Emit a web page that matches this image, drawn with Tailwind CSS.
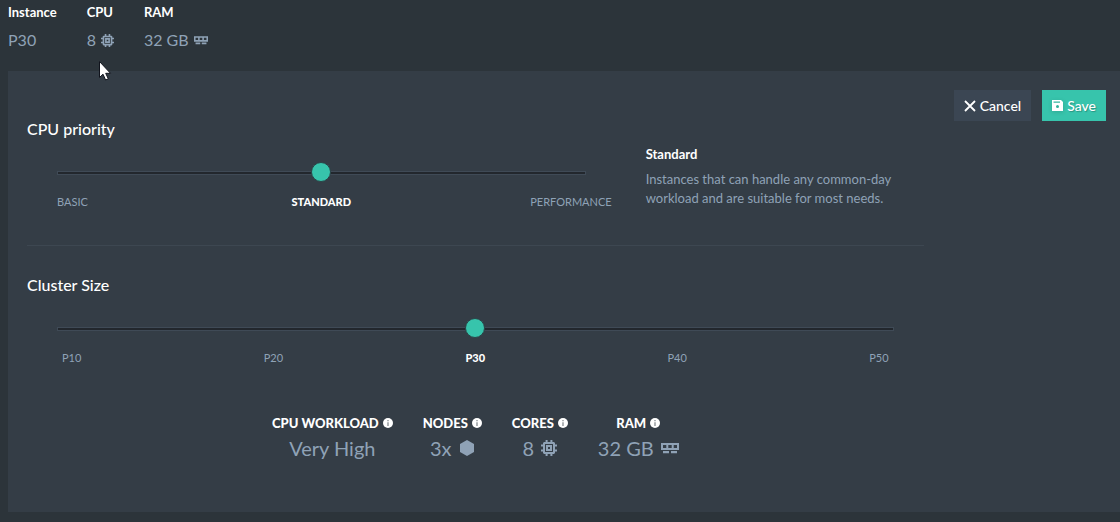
<!DOCTYPE html>
<html lang="en">
<head>
<meta charset="utf-8">
<meta name="viewport" content="width=device-width, initial-scale=1">
<title>Instance size</title>
<script src="https://cdn.jsdelivr.net/npm/@tailwindcss/browser@4"></script>
</head>
<body class="min-h-screen bg-[#2c343a] font-['Lato',sans-serif] text-[#8fa2b6]">
<svg class="hidden">
  <symbol id="chip" viewBox="0 0 16 16">
    <path fill="currentColor" fill-rule="evenodd" d="M4.600 0h2v2h2.800V0h2v2H13l1 1v1.600h2v2h-2v2.800h2v2h-2V13l-1 1h-1.600v2h-2v-2H6.600v2h-2v-2H3l-1-1v-1.600H0v-2h2V6.600H0v-2h2V3l1-1h1.600zM4 4v8h8V4zM5 5h6v6H5zm2 2v2h2V7z"/>
  </symbol>
  <symbol id="ram" viewBox="0 0 18 11">
    <path fill="currentColor" fill-rule="evenodd" d="M0 0h18v7H0zM2 2v3h3.300V2zM7.300 2v3h3.400V2zM12.700 2v3H16V2zM2 8h6v2.300H2zM10 8h6v2.300h-6z"/>
  </symbol>
  <symbol id="info" viewBox="0 0 10 10">
    <circle cx="5" cy="5" r="5" fill="currentColor"/>
    <path fill="#343d46" fill-opacity=".65" d="M4.400 2h1.200v1.200H4.400zM4.400 4.200h1.200V8H4.400z"/>
  </symbol>
</svg>

<header class="flex gap-[30px] pt-1 pl-2">
  <div>
    <div class="text-[13px] leading-4 font-bold text-white">Instance</div>
    <div class="mt-2 text-base leading-6">P30</div>
  </div>
  <div>
    <div class="text-[13px] leading-4 font-bold text-white">CPU</div>
    <div class="mt-2 flex items-center gap-[5px] text-base leading-6">8 <svg class="h-[13px] w-[13px]"><use href="#chip"/></svg></div>
  </div>
  <div>
    <div class="text-[13px] leading-4 font-bold text-white">RAM</div>
    <div class="mt-2 flex items-center gap-[5px] text-base leading-6">32 GB <svg class="h-[9px] w-[14px]"><use href="#ram"/></svg></div>
  </div>
</header>

<form class="mt-[19px] mb-[9px] ml-2 flex items-start gap-[30px] bg-[#343d46] pt-[19px] pr-[14px] pb-[50px] pl-[19px]">
  <main class="min-w-0 flex-1 pt-[27px]">
    <section class="flex border-b border-[#3d4751] pb-[35px]">
      <div class="min-w-0 flex-1">
        <h2 class="text-base leading-6 font-medium text-white"><label for="priority">CPU priority</label></h2>
        <div class="mt-[22px] pl-[30px]">
          <input id="priority" type="range" min="0" max="2" value="1" class="block h-5 w-full cursor-pointer appearance-none bg-transparent [&::-webkit-slider-runnable-track]:h-1 [&::-webkit-slider-runnable-track]:border [&::-webkit-slider-runnable-track]:border-[#3f4a56] [&::-webkit-slider-runnable-track]:bg-[#22272d] [&::-webkit-slider-thumb]:-mt-[10px] [&::-webkit-slider-thumb]:h-5 [&::-webkit-slider-thumb]:w-5 [&::-webkit-slider-thumb]:appearance-none [&::-webkit-slider-thumb]:rounded-full [&::-webkit-slider-thumb]:border [&::-webkit-slider-thumb]:border-[#2b4448] [&::-webkit-slider-thumb]:bg-[#37c4ac]">
          <div class="mt-[11px] grid grid-cols-[1fr_auto_1fr] text-[11px] leading-4">
            <span>BASIC</span>
            <span class="font-black text-white">STANDARD</span>
            <span class="-mr-[26px] justify-self-end">PERFORMANCE</span>
          </div>
        </div>
      </div>
      <div class="ml-[60px] w-[278px] pt-[29px] text-[13px] leading-[19px]">
        <h3 class="leading-4 font-bold text-white">Standard</h3>
        <p class="mt-2">Instances that can handle any common-day workload and are suitable for most needs.</p>
      </div>
    </section>

    <section class="pt-[27px]">
      <h2 class="text-base leading-6 font-medium text-white"><label for="size">Cluster Size</label></h2>
      <div class="mt-[22px] pr-[30px] pl-[30px]">
        <input id="size" type="range" min="0" max="4" value="2" class="block h-5 w-full cursor-pointer appearance-none bg-transparent [&::-webkit-slider-runnable-track]:h-1 [&::-webkit-slider-runnable-track]:border [&::-webkit-slider-runnable-track]:border-[#3f4a56] [&::-webkit-slider-runnable-track]:bg-[#22272d] [&::-webkit-slider-thumb]:-mt-[10px] [&::-webkit-slider-thumb]:h-5 [&::-webkit-slider-thumb]:w-5 [&::-webkit-slider-thumb]:appearance-none [&::-webkit-slider-thumb]:rounded-full [&::-webkit-slider-thumb]:border [&::-webkit-slider-thumb]:border-[#2b4448] [&::-webkit-slider-thumb]:bg-[#37c4ac]">
        <div class="mt-[11px] flex justify-between px-[5px] text-[11px] leading-4">
          <span>P10</span><span>P20</span><span class="font-black text-white">P30</span><span>P40</span><span>P50</span>
        </div>
      </div>
    </section>

    <dl class="mt-[49px] flex justify-center gap-[30px] text-center">
      <div>
        <dt class="flex items-center justify-center gap-1 text-[13px] leading-4 font-black text-white">CPU WORKLOAD <svg class="h-[10px] w-[10px]"><use href="#info"/></svg></dt>
        <dd class="mt-[3px] text-xl leading-7">Very High</dd>
      </div>
      <div>
        <dt class="flex items-center justify-center gap-1 text-[13px] leading-4 font-black text-white">NODES <svg class="h-[10px] w-[10px]"><use href="#info"/></svg></dt>
        <dd class="mt-[3px] flex items-center justify-center gap-[7px] text-xl leading-7">3x <svg class="h-4 w-4" viewBox="0 0 16 16"><path fill="currentColor" d="M8 0l7 4v8l-7 4-7-4V4z"/></svg></dd>
      </div>
      <div>
        <dt class="flex items-center justify-center gap-1 text-[13px] leading-4 font-black text-white">CORES <svg class="h-[10px] w-[10px]"><use href="#info"/></svg></dt>
        <dd class="mt-[3px] flex items-center justify-center gap-[7px] text-xl leading-7">8 <svg class="h-4 w-4"><use href="#chip"/></svg></dd>
      </div>
      <div>
        <dt class="flex items-center justify-center gap-1 text-[13px] leading-4 font-black text-white">RAM <svg class="h-[10px] w-[10px]"><use href="#info"/></svg></dt>
        <dd class="mt-[3px] flex items-center justify-center gap-[7px] text-xl leading-7">32 GB <svg class="h-[11px] w-[18px]"><use href="#ram"/></svg></dd>
      </div>
    </dl>
  </main>

  <div class="flex gap-[11px] text-sm leading-5 font-medium text-white">
    <button type="button" class="flex h-[31px] items-center gap-1 bg-[#3b4653] px-[10px]"><svg class="h-3 w-3" viewBox="0 0 12 12"><path d="M1 1l10 10M11 1L1 11" stroke="currentColor" stroke-width="1.800"/></svg>Cancel</button>
    <button type="submit" class="flex h-[31px] items-center gap-1 bg-[#37c4ac] px-[10px] text-shadow-[1px_1px_1px_#00000040]"><svg class="h-[11px] w-[11px] drop-shadow-sm" viewBox="0 0 11 11"><path fill="currentColor" fill-rule="evenodd" d="M0 0h9l2 2v9H0zM1.500 1.500v1.200h6.500V1.500zM5.500 5a1.500 1.500 0 1 0 0 3 1.500 1.500 0 0 0 0-3z"/></svg>Save</button>
  </div>
</form>

<svg class="pointer-events-none absolute top-[60px] left-[98px] h-[22px] w-[14px]" viewBox="0 0 14 22"><path d="M1.500 1.500v16l3.500-3.300 2.600 5.800 2.700-1.200-2.600-5.500h4.800z" fill="#fff" stroke="#10131c"/></svg>
</body>
</html>
